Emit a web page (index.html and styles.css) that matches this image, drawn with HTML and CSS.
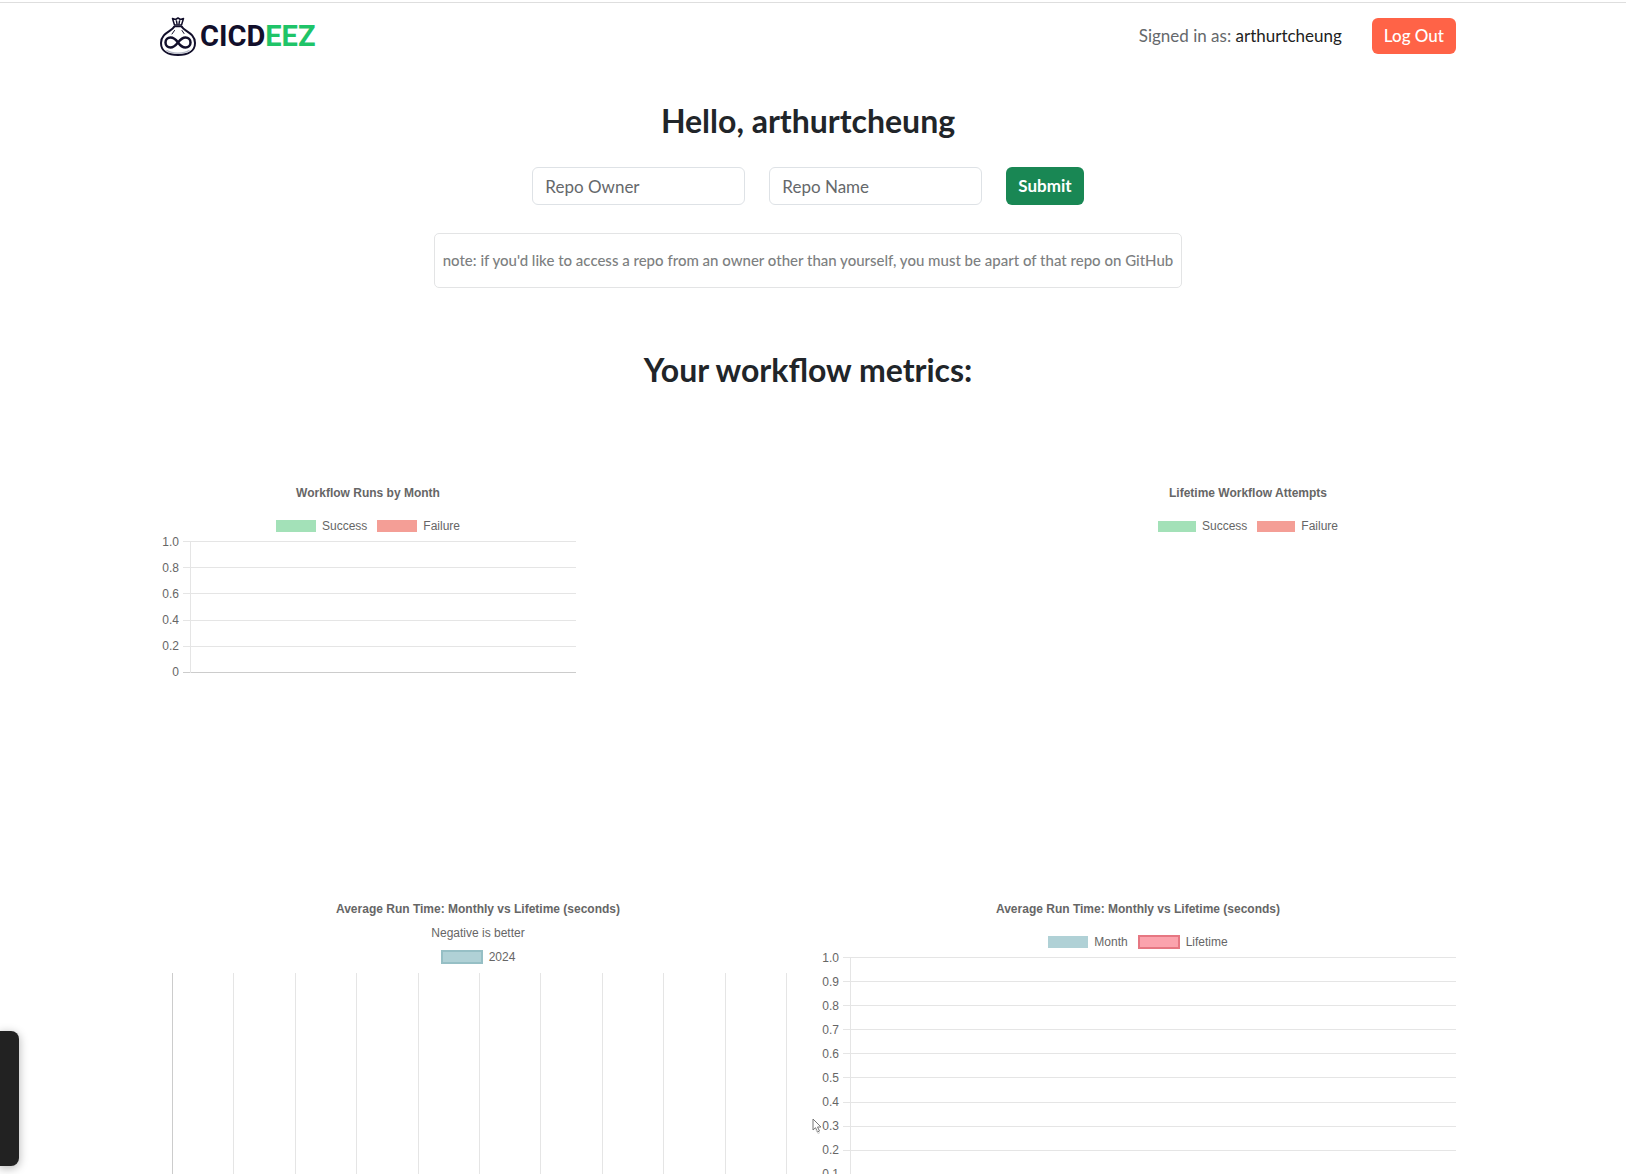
FILE: index.html
```html
<!DOCTYPE html>
<html lang="en">
<head>
<meta charset="utf-8">
<title>CICDEEZ</title>
<link rel="stylesheet" href="styles.css">
</head>
<body>
<div class="page">
  <header class="navbar">
    <a class="brand" href="#">
      <svg class="brand-icon" viewBox="0 0 36 40" aria-hidden="true">
        <g fill="none" stroke="#120f2b" stroke-width="2" stroke-linecap="round" stroke-linejoin="round">
          <path d="M14 11C12 15 1 17 1 27c0 8 7 12 17 12s17-4 17-12c0-10-11-12-13-16" fill="#fff"/>
          <path d="M14.500 9L12.500 2.500l3 1L18 2l2.500 1.500 3-1L21.500 9z" fill="#fff" stroke-width="1.500"/>
          <path d="M14 10.500h8M16.500 5l.5 3M19.500 5l-.5 3" stroke-width="1.500"/>
          <path d="M14.500 14.500L12 18M22 14.500l2 3" stroke-width="1"/>
          <path d="M7 34.500c5 3.500 17 3.500 22 0" stroke="#b9bdca" stroke-width="1.500"/>
          <path d="M18 26.500C15.500 23 13.500 21.500 10.500 21.500a5 5 0 0 0 0 10C13.500 31.500 16 29 18 26.500S22.500 21.500 25.500 21.500a5 5 0 0 1 0 10C22.500 31.500 20.500 30 18 26.500z" stroke-width="2.500"/>
        </g>
      </svg>
      <span class="brand-name">CICD<span class="brand-accent">EEZ</span></span>
    </a>
    <div class="account">
      <span class="signed-in">Signed in as: <a class="username" href="#">arthurtcheung</a></span>
      <button class="btn btn-logout" type="button">Log Out</button>
    </div>
  </header>

  <main class="content">
    <h1 class="heading">Hello, arthurtcheung</h1>
    <form class="repo-form">
      <input class="field" type="text" placeholder="Repo Owner" aria-label="Repo Owner">
      <input class="field" type="text" placeholder="Repo Name" aria-label="Repo Name">
      <button class="btn btn-submit" type="button">Submit</button>
    </form>
    <p class="note">note: if you'd like to access a repo from an owner other than yourself, you must be apart of that repo on GitHub</p>
    <h2 class="heading heading-metrics">Your workflow metrics:</h2>

    <div class="charts charts-top">
      <section class="chart">
        <h3 class="chart-title">Workflow Runs by Month</h3>
        <ul class="legend">
          <li class="key"><span class="swatch green"></span>Success</li>
          <li class="key"><span class="swatch red"></span>Failure</li>
        </ul>
        <div class="plot plot-short">
          <div class="tick"><span>1.0</span></div>
          <div class="tick"><span>0.8</span></div>
          <div class="tick"><span>0.6</span></div>
          <div class="tick"><span>0.4</span></div>
          <div class="tick"><span>0.2</span></div>
          <div class="tick tick-zero"><span>0</span></div>
        </div>
      </section>
      <section class="chart">
        <h3 class="chart-title">Lifetime Workflow Attempts</h3>
        <ul class="legend">
          <li class="key"><span class="swatch flat green"></span>Success</li>
          <li class="key"><span class="swatch flat red"></span>Failure</li>
        </ul>
      </section>
    </div>

    <div class="charts charts-bottom">
      <section class="chart">
        <h3 class="chart-title">Average Run Time: Monthly vs Lifetime (seconds)</h3>
        <p class="chart-subtitle">Negative is better</p>
        <ul class="legend">
          <li class="key"><span class="swatch teal outlined"></span>2024</li>
        </ul>
        <div class="columns">
          <i></i><i></i><i></i><i></i><i></i><i></i><i></i><i></i><i></i><i></i><i></i>
        </div>
      </section>
      <section class="chart">
        <h3 class="chart-title">Average Run Time: Monthly vs Lifetime (seconds)</h3>
        <ul class="legend">
          <li class="key"><span class="swatch teal"></span>Month</li>
          <li class="key"><span class="swatch pink outlined"></span>Lifetime</li>
        </ul>
        <div class="plot plot-tall">
          <div class="tick"><span>1.0</span></div>
          <div class="tick"><span>0.9</span></div>
          <div class="tick"><span>0.8</span></div>
          <div class="tick"><span>0.7</span></div>
          <div class="tick"><span>0.6</span></div>
          <div class="tick"><span>0.5</span></div>
          <div class="tick"><span>0.4</span></div>
          <div class="tick"><span>0.3</span></div>
          <div class="tick"><span>0.2</span></div>
          <div class="tick"><span>0.1</span></div>
          <div class="tick tick-zero"><span>0</span></div>
        </div>
      </section>
    </div>
  </main>
  <div class="side-tab"></div>
  <svg class="cursor" viewBox="0 0 10 17" aria-hidden="true">
    <path d="M1 1v11l2.500-2.300L5.500 14l2-1-2-4H9z" fill="#fff" stroke="#777" stroke-width="1"/>
    <path d="M4 12l2 3.500 2-1" fill="none" stroke="#ccc"/>
  </svg>
</div>
</body>
</html>
```
FILE: styles.css
```css
* { box-sizing: border-box; }

body {
  margin: 0;
  background: #fff;
  color: #212529;
  font-family: Lato, "Open Sans", sans-serif;
  font-size: 17px;
  line-height: 24px;
}

h1, h2, h3, p, ul { margin: 0; padding: 0; font-weight: 400; }

.page {
  position: relative;
  height: 100vh;
  overflow: hidden;
  padding: 2px 10px 0 0;
}
.page::before {
  content: "";
  position: absolute;
  top: 2px;
  left: 0;
  right: 0;
  height: 1px;
  background: #dedede;
}

.navbar, .content {
  max-width: 1320px;
  margin: 0 auto;
  padding: 0 12px;
}
.navbar {
  display: flex;
  align-items: center;
  justify-content: space-between;
  height: 68px;
}
.brand {
  display: flex;
  align-items: center;
  gap: 4px;
  text-decoration: none;
  color: #120f2b;
}
.brand-icon { width: 36px; height: 40px; }
.brand-name {
  font: 700 29px/40px Roboto, sans-serif;
}
.brand-accent { color: #1fc468; }

.account { display: flex; align-items: center; gap: 30px; }
.signed-in { color: #65686b; }
.username { color: #222; text-decoration: none; }

.btn {
  border: 0;
  border-radius: 6px;
  padding: 0 12px;
  color: #fff;
  font: inherit;
  font-weight: 500;
}
.btn-logout { height: 36px; background: #ff6347; }
.btn-submit { height: 38px; background: #198754; font-weight: 700; }

.heading {
  padding-top: 32px;
  font-size: 32px;
  line-height: 38px;
  font-weight: 700;
  text-align: center;
}
.repo-form {
  display: flex;
  justify-content: center;
  gap: 24px;
  margin-top: 27px;
}
.field {
  width: 213px;
  height: 38px;
  border: 1px solid #dee2e6;
  border-radius: 6px;
  padding: 0 12px;
  background: #fff;
  font: inherit;
}
.field::placeholder { color: #65686b; opacity: 1; }

.note {
  width: fit-content;
  margin: 28px auto 0;
  border: 1px solid #e3e4e5;
  border-radius: 5px;
  padding: 16px 8px;
  color: #7d7f81;
  font-size: 15px;
  line-height: 21px;
  font-weight: 500;
}
.heading-metrics { padding-top: 63px; }

.charts {
  display: grid;
  gap: 24px;
  color: #666;
  font: 12px/14px "Liberation Sans", Arial, sans-serif;
}
.charts-top {
  grid-template-columns: 416px 416px;
  justify-content: space-between;
  height: 416px;
  margin-top: 97px;
}
.charts-bottom { grid-template-columns: 1fr 1fr; }

.chart-title {
  font-size: 12px;
  line-height: 14px;
  font-weight: 700;
  text-align: center;
}
.chart-subtitle { margin-top: 10px; text-align: center; }
.legend {
  display: flex;
  justify-content: center;
  gap: 10px;
  height: 14px;
  margin-top: 19px;
  list-style: none;
}
.chart-subtitle + .legend { margin-top: 10px; }
.key { display: flex; align-items: center; gap: 6px; }
.swatch { width: 40px; height: 12px; }
.flat { width: 38px; height: 11px; }
.outlined { width: 42px; height: 14px; border: 2px solid; }
.green { background: #a3e1b8; }
.red { background: #f49e96; }
.teal { background: #b0d1d6; border-color: #96bfc5; }
.pink { background: #fba3ad; border-color: #e67782; }

.plot {
  position: relative;
  display: flex;
  flex-direction: column;
  justify-content: space-between;
  margin-top: 8px;
}
.plot::before {
  content: "";
  position: absolute;
  top: 0;
  bottom: 0;
  left: 30px;
  width: 1px;
  background: #e5e5e5;
}
.plot-short { height: 132px; }
.plot-tall { height: 242px; }
.tick {
  display: flex;
  align-items: center;
  height: 1px;
}
.tick span { width: 19px; margin-right: 4px; text-align: right; }
.tick::after {
  content: "";
  flex: 1;
  height: 1px;
  background: #e5e5e5;
}
.tick-zero::after { background: #ccc; }

.columns {
  display: flex;
  justify-content: space-between;
  height: 300px;
  margin: 9px 9px 0 12px;
}
.columns i { width: 1px; background: #e5e5e5; }
.columns i:first-child { background: #ccc; }

.side-tab {
  position: absolute;
  left: 0;
  top: 1031px;
  width: 19px;
  height: 135px;
  border-radius: 0 8px 8px 0;
  background: #222;
  box-shadow: 0 2px 8px 1px rgba(0, 0, 0, .25);
}
.cursor {
  position: absolute;
  left: 812px;
  top: 1118px;
  width: 10px;
  height: 17px;
}
```
